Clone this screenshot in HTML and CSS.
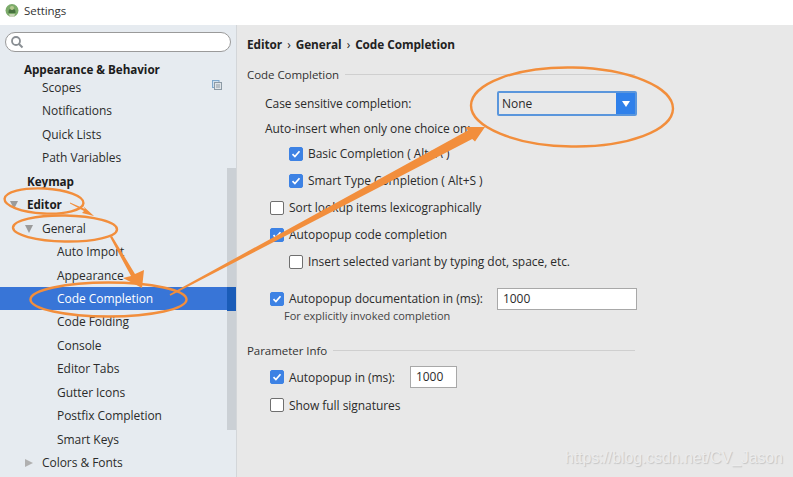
FILE: index.html
```html
<!DOCTYPE html>
<html lang="en">
<head>
<meta charset="utf-8">
<title>Settings</title>
<link rel="stylesheet" href="styles.css">
</head>
<body>
<div class="window">
  <header class="titlebar">
    <svg class="app-icon" width="16" height="16" viewBox="0 0 16 16"><circle cx="8" cy="7.5" r="6.5" fill="#7cab6a"/><path d="M4.5 9a3.5 3.5 0 0 1 7 0v1h-7z" fill="#46703e"/><path d="M5 11h6l-1 3H6z" fill="#c9d4b8"/><circle cx="8" cy="5" r="2" fill="#b7c98f"/></svg>
    <span>Settings</span>
  </header>
  <div class="main">
    <aside class="sidebar">
      <div class="search">
        <svg width="14" height="14" viewBox="0 0 14 14"><circle cx="6" cy="6" r="4" fill="none" stroke="#8a8f94" stroke-width="1.8"/><path d="M9 9l3.5 3.5" stroke="#8a8f94" stroke-width="2"/></svg>
      </div>
      <ul class="tree">
        <li class="row head lv0 bold">Appearance &amp; Behavior</li>
        <li class="row lv1">Scopes<svg class="scope-icon" width="10" height="10" viewBox="0 0 10 10"><rect x="0.5" y="0.5" width="6.5" height="7" fill="#cfe0ef" stroke="#7fa8cc"/><rect x="2.5" y="2.5" width="7" height="7" fill="#dfe4e8" stroke="#8d9aa5"/><path d="M4 5h4M4 7h4" stroke="#8d9aa5"/></svg></li>
        <li class="row lv1">Notifications</li>
        <li class="row lv1">Quick Lists</li>
        <li class="row lv1">Path Variables</li>
        <li class="row lv0 bold">Keymap</li>
        <li class="row lv0 bold"><i class="tri down at0"></i>Editor</li>
        <li class="row lv1"><i class="tri down at1"></i>General</li>
        <li class="row lv2">Auto Import</li>
        <li class="row lv2">Appearance</li>
        <li class="row lv2 selected">Code Completion</li>
        <li class="row lv2">Code Folding</li>
        <li class="row lv2">Console</li>
        <li class="row lv2">Editor Tabs</li>
        <li class="row lv2">Gutter Icons</li>
        <li class="row lv2">Postfix Completion</li>
        <li class="row lv2">Smart Keys</li>
        <li class="row lv1"><i class="tri right at1"></i>Colors &amp; Fonts</li>
      </ul>
      <div class="scrollbar"></div>
      <div class="scrollbar-sel"></div>
    </aside>
    <main class="panel">
      <h1 class="crumbs">Editor<span class="sep">›</span>General<span class="sep">›</span>Code Completion</h1>

      <div class="group-title"><span>Code Completion</span></div>
      <div class="line indent1 h-combo">
        <label class="case-label">Case sensitive completion:</label>
        <div class="combo"><span class="combo-value">None</span><span class="combo-btn"><i></i></span></div>
      </div>
      <div class="line indent1 h-auto">Auto-insert when only one choice on:</div>
      <div class="line indent2 h-a"><span class="check on"><svg width="10" height="10" viewBox="0 0 10 10"><path d="M1.5 5.200l2.400 2.400 4.600-5.400" fill="none" stroke="#fff" stroke-width="1.700"/></svg></span>Basic Completion ( Alt+A )</div>
      <div class="line indent2 h-b"><span class="check on"><svg width="10" height="10" viewBox="0 0 10 10"><path d="M1.5 5.200l2.400 2.400 4.600-5.400" fill="none" stroke="#fff" stroke-width="1.700"/></svg></span>Smart Type Completion ( Alt+S )</div>
      <div class="line indent3 h-b"><span class="check"></span>Sort lookup items lexicographically</div>
      <div class="line indent3 h-b"><span class="check on"><svg width="10" height="10" viewBox="0 0 10 10"><path d="M1.5 5.200l2.400 2.400 4.600-5.400" fill="none" stroke="#fff" stroke-width="1.700"/></svg></span>Autopopup code completion</div>
      <div class="line indent2 h-b"><span class="check"></span>Insert selected variant by typing dot, space, etc.</div>
      <div class="line indent3 h-doc">
        <span class="check on"><svg width="10" height="10" viewBox="0 0 10 10"><path d="M1.5 5.200l2.400 2.400 4.600-5.400" fill="none" stroke="#fff" stroke-width="1.700"/></svg></span>
        <span class="doc-label">Autopopup documentation in (ms):</span>
        <div class="field wide">1000</div>
      </div>
      <div class="line note">For explicitly invoked completion</div>

      <div class="group-title second"><span>Parameter Info</span></div>
      <div class="line indent3 h-param">
        <span class="check on"><svg width="10" height="10" viewBox="0 0 10 10"><path d="M1.5 5.200l2.400 2.400 4.600-5.400" fill="none" stroke="#fff" stroke-width="1.700"/></svg></span>
        <span class="param-label">Autopopup in (ms):</span>
        <div class="field narrow">1000</div>
      </div>
      <div class="line indent3 h-sig"><span class="check"></span>Show full signatures</div>
    </main>
  </div>
  <svg class="marks" width="793" height="477" viewBox="0 0 793 477">
    <g fill="none" stroke="#f28e3c" stroke-width="2.4">
      <ellipse cx="44" cy="201" rx="39.500" ry="12.500" transform="rotate(3 44 201)"/>
      <ellipse cx="65" cy="228.500" rx="52" ry="13" transform="rotate(1 65 228)"/>
      <ellipse cx="108.500" cy="299.500" rx="78" ry="17"/>
      <ellipse cx="572" cy="107" rx="101" ry="39.500" transform="rotate(1 572 107)"/>
    </g>
    <g fill="#f28e3c">
      <polygon points="70,202.500 85,209 83,206 94,216 82,213 84,211 70,203.500"/>
      <polygon points="110,237 112,236 135,274 144,270 142,288 123,278 131,276"/>
      <polygon points="169.600,294.300 467.800,130.500 465.500,127 485,127 475,141.500 472.200,139 170.400,295.700"/>
    </g>
  </svg>
  <div class="watermark">https://blog.csdn.net/CV_Jason</div>
</div>
</body>
</html>
```
FILE: styles.css
```css
* { box-sizing: border-box; }
html, body { margin: 0; padding: 0; }
body { width: 793px; height: 477px; overflow: hidden; background: #e8e8e8; font-family: "Open Sans", "Noto Sans", sans-serif; font-size: 12px; letter-spacing: -0.05px; color: #2b2b2b; }
.window { position: relative; width: 793px; height: 477px; overflow: hidden; display: flex; flex-direction: column; }
.titlebar { height: 25px; flex: none; background: #fff; display: flex; align-items: center; gap: 4px; padding: 0 0 4px 4px; font-size: 11.5px; color: #333; }
.main { flex: 1; display: flex; min-height: 0; }
.sidebar { position: relative; width: 237px; flex: none; background: #e6ebf0; border-right: 1px solid #d3d6d9; padding-top: 7px; }
.search { width: 226px; height: 20px; margin-left: 5px; background: #fff; border: 1px solid #9a9a9a; border-radius: 10px; display: flex; align-items: center; padding-left: 4px; }
.tree { list-style: none; margin: 10px 0 0; padding: 0; }
.row { height: 23.45px; line-height: 23.45px; position: relative; white-space: nowrap; }
.row.head { height: 14px; line-height: 15px; }
.lv0 { padding-left: 24px; }
.bold { font-weight: 700; font-size: 11.7px; color: #1c1c1c; }
.lv0.bold { padding-left: 27px; }
.head.lv0.bold { padding-left: 24px; }
.lv1 { padding-left: 42px; }
.lv2 { padding-left: 57px; }
.selected { background: #3875d7; color: #fff; }
.scope-icon { position: absolute; left: 212px; top: 4px; }
.tri { position: absolute; width: 0; height: 0; }
.tri.down { border-left: 4px solid transparent; border-right: 4px solid transparent; border-top: 8px solid #9b9b9b; top: 8px; }
.tri.right { border-top: 4px solid transparent; border-bottom: 4px solid transparent; border-left: 8px solid #b0b0b0; top: 8px; }
.at0 { left: 10px; }
.at1 { left: 25px; }
.scrollbar { position: absolute; left: 227px; top: 143px; width: 9px; height: 262px; background: #cbd0d5; }
.scrollbar-sel { position: absolute; left: 227px; top: 262px; width: 9px; height: 24px; background: #1a5cb8; }
.panel { flex: 1; padding: 0 0 0 10px; min-width: 0; }
.crumbs { margin: 0; height: 36px; padding-top: 10px; line-height: 18px; font-size: 11.8px; font-weight: 700; color: #222; }
.sep { font-weight: 400; margin: 0 5px; }
.group-title { display: flex; align-items: center; gap: 6px; height: 18px; margin-top: 4px; width: 388px; color: #333; font-size: 11.5px; }
.group-title::after { content: ""; flex: 1; height: 1px; background: #cfcfcf; }
.group-title.second { margin-top: 17px; }
.line { display: flex; align-items: center; white-space: nowrap; }
.indent1 { padding-left: 18px; }
.indent2 { padding-left: 42px; }
.indent3 { padding-left: 23px; }
.h-combo { height: 27px; margin-top: 7px; }
.h-auto { height: 23px; }
.h-a { height: 27px; }
.h-b { height: 27px; }
.check { width: 14px; height: 14px; flex: none; margin-right: 5px; border: 1px solid #6f6f6f; border-radius: 2px; background: #fff; display: flex; align-items: center; justify-content: center; }
.check.on { background: #3d82e4; border-color: #3d82e4; }
.case-label { width: 232px; }
.combo { width: 140px; height: 25px; border: 2px solid #5a96dc; border-radius: 2px; display: flex; align-items: stretch; background: #e9e9e9; }
.combo-value { flex: 1; padding-left: 3px; line-height: 22px; }
.combo-btn { width: 19px; background: #2f80ea; display: flex; align-items: center; justify-content: center; }
.combo-btn i { width: 0; height: 0; border-left: 4px solid transparent; border-right: 4px solid transparent; border-top: 6px solid #fff; }
.h-doc { height: 23px; margin-top: 12px; }
.doc-label { width: 208px; }
.field { height: 22px; background: #fff; border: 1px solid #a8a8a8; line-height: 20px; padding-left: 5px; }
.wide { width: 140px; }
.narrow { width: 47px; }
.note { padding-left: 37px; height: 17px; font-size: 11px; color: #444; margin-top: -3px; }
.h-param { height: 24px; margin-top: 6px; }
.param-label { width: 121px; }
.h-sig { height: 32px; margin-top: 0; }
.marks { position: absolute; left: 0; top: 0; pointer-events: none; }
.watermark { position: absolute; left: 565px; top: 449px; font-family: "Liberation Sans", sans-serif; font-size: 15.85px; line-height: 18px; color: #ececec; text-shadow: 1px 1px 1px #c4c4c4; }
```
